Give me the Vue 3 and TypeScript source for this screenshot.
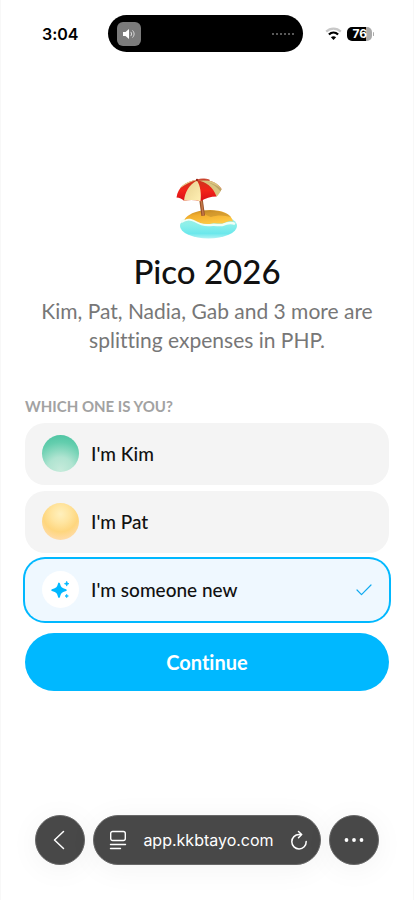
<script setup lang="ts">
import { ref } from 'vue'

interface Member {
  id: string
  label: string
}

const members: Member[] = [
  { id: 'kim', label: "I'm Kim" },
  { id: 'pat', label: "I'm Pat" },
  { id: 'new', label: "I'm someone new" },
]

const selected = ref<string>('new')
const address = ref<string>('app.kkbtayo.com')
</script>

<template>
  <div class="screen">
    <header class="status">
      <time class="clock">3:04</time>
      <div class="island">
        <span class="sound">
          <svg width="16" height="14" viewBox="0 0 16 14" aria-hidden="true">
            <path d="M2 5h2.500L8 2v10L4.500 9H2z" fill="#fff" />
            <path d="M10 5.200c.8 1.100.8 2.500 0 3.600M11.800 3.700c1.800 2 1.800 4.600 0 6.600" fill="none" stroke="#ddd" stroke-width="1" stroke-linecap="round" />
          </svg>
        </span>
        <svg class="dots" width="22" height="2" viewBox="0 0 22 2" aria-hidden="true">
          <path d="M0 1h22" stroke="#777" stroke-width="1.500" stroke-dasharray="2 2" />
        </svg>
      </div>
      <div class="signals">
        <svg width="17" height="14" viewBox="0 0 17 14" aria-hidden="true">
          <path d="M1.200 4.600C5.300.5 11.700.5 15.800 4.600" fill="none" stroke="#c8c8c8" stroke-width="2.200" />
          <path d="M3.900 7.500c2.700-2.500 6.500-2.500 9.200 0" fill="none" stroke="#000" stroke-width="2.300" />
          <path d="M5.900 10.200c1.500-1.300 3.700-1.300 5.200 0L8.500 13z" fill="#000" />
        </svg>
        <span class="battery"><span class="charge">76</span></span>
      </div>
    </header>

    <main class="content">
      <svg class="emoji" width="64" height="64" viewBox="0 0 64 64" role="img" aria-label="Beach with umbrella">
        <defs>
          <linearGradient id="water" x1="0" y1="0" x2="0" y2="1">
            <stop offset="0" stop-color="#a9ecdf" />
            <stop offset=".45" stop-color="#8cf0ea" />
            <stop offset=".8" stop-color="#6ce8ec" />
            <stop offset="1" stop-color="#b2f3f4" />
          </linearGradient>
          <linearGradient id="sand" x1="0" y1="0" x2=".5" y2="1">
            <stop offset="0" stop-color="#b98122" />
            <stop offset=".4" stop-color="#f1ad2d" />
            <stop offset="1" stop-color="#ffc944" />
          </linearGradient>
          <linearGradient id="red" x1="0" y1="0" x2="0" y2="1">
            <stop offset="0" stop-color="#c9371e" />
            <stop offset=".5" stop-color="#f32319" />
            <stop offset="1" stop-color="#d80f18" />
          </linearGradient>
          <linearGradient id="cream" x1="0" y1="0" x2="1" y2="1">
            <stop offset="0" stop-color="#e6cf8e" />
            <stop offset="1" stop-color="#fff0b4" />
          </linearGradient>
        </defs>
        <ellipse cx="33.500" cy="51" rx="28.500" ry="12.500" fill="url(#water)" />
        <path d="M6 47c4-3 9-4 14-1 5 3 9 4.500 15 4 5-1 8 .5 12 0 5-2 9-3 13-1" fill="none" stroke="#effff7" stroke-width="2.500" />
        <path d="M9.500 45C10 42 17 37 27 35.500c14-2 29 1 31 11-3-.5-6 0-9 1.500-4 1.500-8-.5-12 .5-7 1.500-13-.5-17-3-4-2-7-2.500-10.500-.5z" fill="url(#sand)" />
        <path d="M27 36c10-1.500 24 0 29 6-7-2-14-2-20 0-4-1-7-3-9-6z" fill="#8f6827" opacity=".3" />
        <path d="M23.500 19H27l3 21.500-3.600.6z" fill="#99532b" />
        <path d="M25.200 22l1.300-.5 2.500 19-1.500.3z" fill="#c77a4b" />
        <path d="M22 5C11 6 3 12 1.500 22.500c3 0 5.500 1.500 7.500 3.300 5.500-1.200 11-1 16.500.4 5-2.700 10-4.700 16-4.700 1.600-2.500 3.300-4.800 5-7.500C43 7.500 33 3.500 22 5z" fill="url(#red)" />
        <path d="M22 5.500C14 10 10 17 9 25.800c5.500-1.200 11-1 16.500.4C26.500 19 25.500 11 22 5.500z" fill="url(#cream)" />
        <path d="M22 5C14 5.500 8 9 4.800 13.500 10 9.500 15 7 22 5z" fill="#e6cf8e" />
        <path d="M22 5.300C31 6.500 38 12 41.500 21.500c2-1.500 3.600-4 5-7.500C43 7.500 33 3.500 22 5.300z" fill="#d9c581" />
        <path d="M32 7c6 1.500 11 4 14.500 7l-1 2.500C42 12 38 9 32 7z" fill="#bda466" />
        <path d="M22 5c5-1.700 9-1.300 12.500.2C30 5 26 5.200 22 5.500z" fill="#c9402a" stroke="#c9402a" stroke-width=".8" />
        <circle cx="22" cy="5" r="1.200" fill="#9a2919" />
      </svg>
      <h1 class="title">Pico 2026</h1>
      <p class="summary">Kim, Pat, Nadia, Gab and 3 more are splitting expenses in PHP.</p>

      <form class="picker" @submit.prevent>
        <fieldset class="choices">
          <legend class="legend">WHICH ONE IS YOU?</legend>
          <label v-for="m in members" :key="m.id" class="choice" :class="{ active: selected === m.id }">
            <input v-model="selected" class="radio" type="radio" name="member" :value="m.id" />
            <span class="avatar" :class="m.id">
              <svg v-if="m.id === 'new'" width="21" height="21" viewBox="0 0 21 21" aria-hidden="true">
                <g fill="#00b8ff" stroke="#00b8ff" stroke-linejoin="round">
                  <path d="M9 4.500C10.200 9 11 9.800 15.800 11.200 11 12.600 10.200 13.400 9 17.900 7.800 13.400 7 12.600 2.200 11.200 7 9.800 7.800 9 9 4.500z" stroke-width="1.800" />
                  <path d="M16.700 2.300c.4 1.700.7 2 2.300 2.400-1.600.4-1.900.7-2.300 2.400-.4-1.700-.7-2-2.300-2.400 1.600-.4 1.900-.7 2.300-2.400zM16.700 15.300c.3 1.200.5 1.400 1.700 1.700-1.200.3-1.400.5-1.700 1.700-.3-1.200-.5-1.400-1.700-1.700 1.200-.3 1.400-.5 1.700-1.700z" stroke-width=".7" />
                </g>
              </svg>
            </span>
            <span class="name">{{ m.label }}</span>
            <svg v-if="selected === m.id" width="16" height="12" viewBox="0 0 16 12" aria-hidden="true">
              <path d="M1 6l4.500 4.600L15 1" fill="none" stroke="#10aaf0" stroke-width="1.200" stroke-linecap="round" stroke-linejoin="round" />
            </svg>
          </label>
        </fieldset>
        <button class="continue" type="submit">Continue</button>
      </form>
    </main>

    <nav class="browser" aria-label="Browser">
      <button class="round" type="button" aria-label="Back">
        <svg width="14" height="20" viewBox="0 0 14 20" aria-hidden="true">
          <path d="M10.500 1.500L1.500 10l9 8.500" fill="none" stroke="#fff" stroke-width="1.500" stroke-linecap="round" stroke-linejoin="round" />
        </svg>
      </button>
      <div class="bar">
        <button class="plain" type="button" aria-label="Page menu">
          <svg width="18" height="20" viewBox="0 0 18 20" fill="none" stroke="#fff" stroke-width="1.400" stroke-linecap="round" aria-hidden="true">
            <rect x="1.700" y="1.500" width="14.600" height="9" rx="2" />
            <path d="M1.500 14.500h15M1.500 18.500h10" />
          </svg>
        </button>
        <input v-model="address" class="address" type="text" aria-label="Address" />
        <button class="plain" type="button" aria-label="Reload">
          <svg width="18" height="21" viewBox="0 0 18 21" fill="none" stroke="#fff" stroke-width="1.500" stroke-linecap="round" stroke-linejoin="round" aria-hidden="true">
            <path d="M16.200 11.500A7.200 7.200 0 1 1 9 4.500h2.500M8.500 1.500l3.200 3-3.200 3.200" />
          </svg>
        </button>
      </div>
      <button class="round" type="button" aria-label="More">
        <svg width="20" height="4" viewBox="0 0 20 4" fill="#fff" aria-hidden="true">
          <circle cx="2.500" cy="2" r="1.900" /><circle cx="10" cy="2" r="1.900" /><circle cx="17.500" cy="2" r="1.900" />
        </svg>
      </button>
    </nav>
  </div>
</template>

<style>
body {
  background: #fff;
}
</style>

<style scoped>
.screen {
  box-sizing: border-box;
  min-height: 100vh;
  display: flex;
  flex-direction: column;
  border: solid #f8f8f8;
  border-width: 0 1px;
  font-family: Lato, 'Liberation Sans', sans-serif;
  font-variant-ligatures: none;
  color: #111;
}
button,
input {
  font: inherit;
  margin: 0;
  padding: 0;
  border: 0;
}
button {
  cursor: pointer;
}
svg {
  display: block;
  flex: none;
}
.status {
  display: grid;
  grid-template-columns: 1fr 195px 1fr;
  align-items: center;
  padding: 15px 4px 16px 0;
  font-family: Inter, sans-serif;
}
.clock {
  justify-self: center;
  padding-left: 12px;
  font-size: 16px;
  line-height: 20px;
  font-weight: 600;
  color: #000;
}
.island {
  display: flex;
  align-items: center;
  justify-content: space-between;
  height: 37px;
  box-sizing: border-box;
  padding: 0 9px;
  border-radius: 19px;
  background: #000;
}
.sound {
  display: grid;
  place-items: center;
  width: 24px;
  height: 24px;
  border-radius: 6px;
  background: #7b7b7b;
}
.signals {
  display: flex;
  align-items: center;
  justify-content: center;
  gap: 5px;
  padding-right: 12px;
}
.battery {
  display: flex;
  align-items: center;
  gap: 1px;
}
.battery::after {
  content: '';
  width: 1px;
  height: 4px;
  border-radius: 1px;
  background: #aaa;
}
.charge {
  box-sizing: border-box;
  width: 25px;
  height: 14px;
  border-radius: 5px;
  background: linear-gradient(90deg, #000 76%, #aaa 76%);
  color: #fff;
  font-size: 12px;
  line-height: 14px;
  font-weight: 700;
  text-align: center;
}
.content {
  flex: 1;
  display: flex;
  flex-direction: column;
  justify-content: center;
  align-items: center;
  padding: 0 24px 18px;
}
.title {
  margin: 12px 0 0;
  font-size: 33px;
  line-height: 40px;
  font-weight: 500;
}
.summary {
  max-width: 340px;
  margin: 5px 0 0;
  font-size: 21px;
  line-height: 29px;
  text-align: center;
  color: #777;
}
.picker {
  align-self: stretch;
  display: flex;
  flex-direction: column;
  gap: 12px;
  margin-top: 42px;
}
.choices {
  display: flex;
  flex-direction: column;
  gap: 6px;
  min-width: 0;
  margin: 0;
  padding: 0;
  border: 0;
}
.legend {
  padding: 0 0 7px;
  font-size: 15px;
  line-height: 20px;
  font-weight: 700;
  color: #a2a2a2;
}
.choice {
  position: relative;
  display: flex;
  align-items: center;
  gap: 12px;
  height: 62px;
  box-sizing: border-box;
  padding: 0 17px;
  border-radius: 20px;
  background: #f4f4f4;
  font-size: 19px;
  line-height: 24px;
  font-weight: 500;
}
.choice.active {
  background: #eff8ff;
  box-shadow: 0 0 0 2px #00b8ff;
}
.radio {
  position: absolute;
  inset: 0;
  appearance: none;
  border-radius: 20px;
  cursor: pointer;
}
.avatar {
  display: grid;
  place-items: center;
  flex: none;
  width: 37px;
  height: 37px;
  border-radius: 50%;
}
.kim {
  background: radial-gradient(circle 37px at 50% 95%, #c6ebdb 0%, #b0e4d1 35%, #64ceae 75%, #4bc3a1 100%);
}
.pat {
  background: radial-gradient(circle 26px at 50% 30%, #fff0bd 0%, #ffe5a0 35%, #fed67e 68%, #ffdcab 100%);
}
.new {
  background: #fff;
}
.name {
  flex: 1;
}
.continue {
  height: 58px;
  border-radius: 29px;
  background: #00b8ff;
  color: #fff;
  font-size: 20px;
  line-height: 24px;
  font-weight: 700;
}
.browser {
  display: flex;
  justify-content: space-between;
  gap: 8px;
  padding: 0 34px 35px;
  font-family: Inter, sans-serif;
}
.round,
.bar {
  height: 50px;
  box-sizing: border-box;
  border: 1px solid #686868;
  border-radius: 25px;
  background: #484848;
  box-shadow: 0 4px 30px rgba(0, 0, 0, 0.05);
}
.round {
  display: grid;
  place-items: center;
  flex: none;
  width: 50px;
}
.bar {
  display: flex;
  flex: 1;
  align-items: center;
  min-width: 0;
  padding: 0 12px 0 15px;
}
.plain {
  flex: none;
  background: none;
}
.address {
  flex: 1;
  min-width: 0;
  background: none;
  color: #fff;
  font-size: 16px;
  line-height: 24px;
  text-align: center;
}
</style>
